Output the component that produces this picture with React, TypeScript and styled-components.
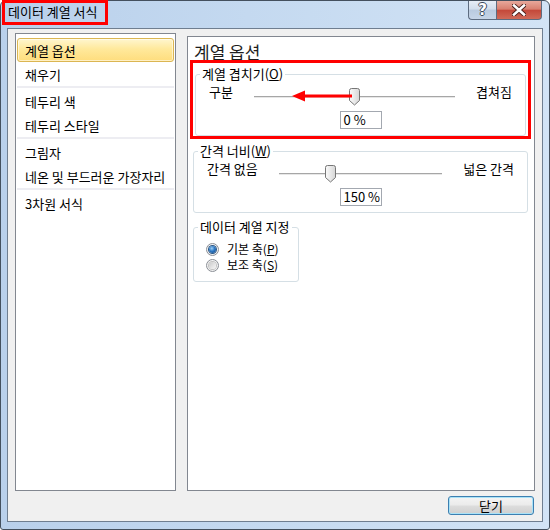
import React from "react";
import styled, { createGlobalStyle, css } from "styled-components";

const Global = createGlobalStyle`
  html, body { margin: 0; padding: 0; background: #ffffff; }
  body {
    width: 550px; height: 530px; overflow: hidden;
    font-family: "Noto Sans CJK KR", "Noto Sans", sans-serif;
    font-size: 13px; color: #000;
  }
  * { box-sizing: border-box; }
`;

const Window = styled.div`
  width: 550px;
  height: 530px;
  display: flex;
  flex-direction: column;
  border: 1px solid #44505e;
  border-radius: 6px 6px 3px 3px;
  background: linear-gradient(to right, #b9d0eb 0%, #c4d9f0 45%, #d2e3f5 100%);
  padding: 0 6px 7px 6px;
`;

const TitleBar = styled.div`
  height: 27px;
  display: flex;
  align-items: flex-start;
  justify-content: space-between;
  margin-right: 1px;
`;

const TitleText = styled.div`
  width: 106px;
  height: 25px;
  margin: -1px 0 0 -5px;
  border: 3px solid #ff0000;
  padding-left: 3px;
  line-height: 18px;
  font-size: 13px;
  color: #000;
  white-space: nowrap;
`;

const Caption = styled.div`
  display: flex;
`;

const CaptionButton = styled.div<{ $kind: "help" | "close" }>`
  height: 19px;
  display: flex;
  align-items: center;
  justify-content: center;
  border: 1px solid #5d6c80;
  border-top: none;
  ${(p) =>
    p.$kind === "help"
      ? css`
          width: 28px;
          border-right: none;
          border-radius: 0 0 0 4px;
          background: linear-gradient(to bottom, #e6edf6 0%, #d2deec 45%, #b9cadf 50%, #c6d5e7 100%);
        `
      : css`
          width: 46px;
          border-radius: 0 0 4px 0;
          background: linear-gradient(to bottom, #e8a89b 0%, #d88070 45%, #c4493a 52%, #d06a58 100%);
        `}
`;

const HelpGlyph = styled.span`
  font-family: "DejaVu Sans", sans-serif;
  font-weight: bold;
  font-size: 15px;
  line-height: 16px;
  color: #ffffff;
  text-shadow: 1px 0 0 #3b4a5c, -1px 0 0 #3b4a5c, 0 1px 0 #3b4a5c, 0 -1px 0 #3b4a5c;
`;

const Client = styled.div`
  flex: 1;
  min-height: 0;
  display: flex;
  flex-direction: column;
  background: #f0f0f0;
  border: 1px solid #6f7e90;
  padding: 4px 7px 6px 7px;
`;

const Body = styled.div`
  flex: 1;
  min-height: 0;
  display: flex;
  align-items: stretch;
  gap: 11px;
`;

const NavPanel = styled.div`
  width: 161px;
  background: #ffffff;
  border: 1px solid #828790;
  padding: 4px 1px;
  display: flex;
  flex-direction: column;
`;

const NavItem = styled.div<{ $active?: boolean }>`
  height: 24px;
  line-height: 24px;
  padding-left: 7px;
  border: 1px solid transparent;
  border-radius: 3px;
  white-space: nowrap;
  color: #000;
  ${(p) =>
    p.$active &&
    css`
      border-color: #dbb652;
      background: linear-gradient(to bottom, #fff6cf 0%, #ffe99c 45%, #fedd7d 100%);
      box-shadow: inset 0 0 0 1px rgba(255, 255, 255, 0.55);
    `}
`;

const NavSeparator = styled.div`
  height: 2px;
  margin-bottom: 1px;
  background: #ededf2;
`;

const ContentPanel = styled.div`
  flex: 1;
  margin-top: 3px;
  background: #ffffff;
  border: 1px solid #828790;
  padding: 5px 6px 0 5px;
  display: flex;
  flex-direction: column;
`;

const Heading = styled.div`
  font-size: 17px;
  line-height: 20px;
  height: 21px;
  padding-left: 1px;
  color: #1e1e1e;
`;

const Highlight = styled.div`
  position: relative;
  margin: -3px -3px 0 -3px;
  border: 3px solid #ff0000;
  padding: 3px 2px 0 2px;
`;

const Group = styled.fieldset<{ $width?: number; $gap?: number }>`
  margin: ${(p) => p.$gap ?? 0}px 0 0 0;
  min-width: 0;
  width: ${(p) => (p.$width ? `${p.$width}px` : "auto")};
  border: 1px solid #d5dfe5;
  border-radius: 3px;
  padding: 0 13px 6px 13px;
`;

const Legend = styled.legend`
  margin-left: -9px;
  padding: 0 2px;
  line-height: 16px;
  height: 16px;
  font-size: 13px;
  color: #000;
  white-space: nowrap;
`;

const SliderRow = styled.div`
  display: flex;
  align-items: flex-start;
  height: 24px;
`;

const Label = styled.span`
  line-height: 20px;
  white-space: nowrap;
`;

const Slider = styled.div`
  flex: 1;
  position: relative;
  height: 18px;
  margin: 6px 21px 0 21px;
`;

const Track = styled.div`
  margin-top: 8px;
  height: 2px;
  border-top: 1px solid #a6a6a6;
  border-bottom: 1px solid #e7e7e7;
`;

const ThumbSvg = styled.svg`
  position: absolute;
  top: 0;
  width: 11px;
  height: 18px;
`;

const ArrowSvg = styled.svg`
  position: absolute;
  top: 1px;
  width: 62px;
  height: 14px;
`;

const ValueBox = styled.div`
  margin: 5px auto 0;
  width: 42px;
  height: 18px;
  border: 1px solid #a3a8b0;
  background: #ffffff;
  padding-left: 3px;
  line-height: 16px;
  font-size: 13px;
  white-space: nowrap;
`;

const RadioList = styled.div`
  padding-top: 6px;
  padding-bottom: 2px;
  display: flex;
  flex-direction: column;
`;

const RadioRow = styled.div`
  height: 16px;
  display: flex;
  align-items: center;
  gap: 8px;
  margin-left: -1px;
  line-height: 16px;
  font-size: 12px;
`;

const RadioCircle = styled.span<{ $checked?: boolean }>`
  flex: none;
  width: 13px;
  height: 13px;
  border-radius: 50%;
  border: 1px solid #8b8f96;
  background: radial-gradient(circle at 50% 40%, #ffffff 0%, #eaeaea 100%);
  display: flex;
  align-items: center;
  justify-content: center;
  &::after {
    content: "";
    width: 7px;
    height: 7px;
    border-radius: 50%;
    ${(p) =>
      p.$checked
        ? css`
            background: radial-gradient(circle at 40% 35%, #9fd0f5 0%, #2c78c4 45%, #0a3f7e 100%);
            box-shadow: 0 0 0 1px #2a5684;
          `
        : css`
            background: linear-gradient(135deg, #c9c9c9 0%, #e6e6e6 60%, #f6f6f6 100%);
            box-shadow: 0 0 0 1px #c2c2c2;
          `}
  }
`;

const Footer = styled.div`
  display: flex;
  justify-content: flex-end;
  margin-top: 5px;
  padding-right: 1px;
`;

const PushButton = styled.div`
  width: 86px;
  height: 19px;
  border: 1px solid #3c7fb1;
  border-radius: 3px;
  box-shadow: inset 0 0 0 1px #a9e2f7;
  background: linear-gradient(to bottom, #f4f4f4 0%, #ebebeb 48%, #dddddd 52%, #cfcfcf 100%);
  display: flex;
  align-items: center;
  justify-content: center;
  line-height: 16px;
  font-size: 13px;
`;

type SliderProps = { min: number; max: number; value: number; arrow?: boolean };

function SliderControl({ min, max, value, arrow }: SliderProps) {
  const frac = (value - min) / (max - min);
  const left = `calc(${frac} * (100% - 11px))`;
  return (
    <Slider>
      <Track />
      <ThumbSvg viewBox="0 0 11 18" style={{ left }}>
        <defs>
          <linearGradient id="thumbFill" x1="0" y1="0" x2="1" y2="0">
            <stop offset="0" stopColor="#fbfbfb" />
            <stop offset="1" stopColor="#d6d6d6" />
          </linearGradient>
        </defs>
        <path
          d="M2.5 0.5 H8.5 Q10.5 0.5 10.5 2.5 V12.5 L5.5 17 L0.5 12.5 V2.5 Q0.5 0.5 2.5 0.5 Z"
          fill="url(#thumbFill)"
          stroke="#767676"
          strokeWidth="1"
        />
      </ThumbSvg>
      {arrow && (
        <ArrowSvg viewBox="0 0 62 14" style={{ left: `calc(${frac} * (100% - 11px) - 59px)` }}>
          <polygon points="2,7 15,1.5 15,12.5" fill="#ff0000" />
          <rect x="14" y="5.5" width="48" height="3" fill="#ff0000" />
        </ArrowSvg>
      )}
    </Slider>
  );
}

const navGroups: string[][] = [
  ["계열 옵션", "채우기"],
  ["테두리 색", "테두리 스타일"],
  ["그림자", "네온 및 부드러운 가장자리"],
  ["3차원 서식"],
];

export default function App() {
  return (
    <>
      <Global />
      <Window>
        <TitleBar>
          <TitleText>데이터 계열 서식</TitleText>
          <Caption>
            <CaptionButton $kind="help">
              <HelpGlyph>?</HelpGlyph>
            </CaptionButton>
            <CaptionButton $kind="close">
              <svg width="14" height="12" viewBox="0 0 14 12">
                <path d="M2 1.5 L12 10.5 M12 1.5 L2 10.5" stroke="#4a1e18" strokeWidth="4.4" strokeLinecap="square" />
                <path d="M2 1.5 L12 10.5 M12 1.5 L2 10.5" stroke="#ffffff" strokeWidth="2.6" strokeLinecap="square" />
              </svg>
            </CaptionButton>
          </Caption>
        </TitleBar>
        <Client>
          <Body>
            <NavPanel>
              {navGroups.map((g, gi) => (
                <React.Fragment key={gi}>
                  {gi > 0 && <NavSeparator />}
                  {g.map((item) => (
                    <NavItem key={item} $active={item === "계열 옵션"}>
                      {item}
                    </NavItem>
                  ))}
                </React.Fragment>
              ))}
            </NavPanel>
            <ContentPanel>
              <Heading>계열 옵션</Heading>
              <Highlight>
                <Group>
                  <Legend>
                    계열 겹치기(<u>O</u>)
                  </Legend>
                  <SliderRow>
                    <Label>구분</Label>
                    <SliderControl min={-100} max={100} value={0} arrow />
                    <Label>겹쳐짐</Label>
                  </SliderRow>
                  <ValueBox>0 %</ValueBox>
                </Group>
              </Highlight>
              <Group $gap={4}>
                <Legend>
                  간격 너비(<u>W</u>)
                </Legend>
                <SliderRow>
                  <Label>간격 없음</Label>
                  <SliderControl min={0} max={500} value={150} />
                  <Label>넓은 간격</Label>
                </SliderRow>
                <ValueBox>150 %</ValueBox>
              </Group>
              <Group $gap={6} $width={106}>
                <Legend>데이터 계열 지정</Legend>
                <RadioList>
                  <RadioRow>
                    <RadioCircle $checked />
                    <span>
                      기본 축(<u>P</u>)
                    </span>
                  </RadioRow>
                  <RadioRow>
                    <RadioCircle />
                    <span>
                      보조 축(<u>S</u>)
                    </span>
                  </RadioRow>
                </RadioList>
              </Group>
            </ContentPanel>
          </Body>
          <Footer>
            <PushButton>닫기</PushButton>
          </Footer>
        </Client>
      </Window>
    </>
  );
}
